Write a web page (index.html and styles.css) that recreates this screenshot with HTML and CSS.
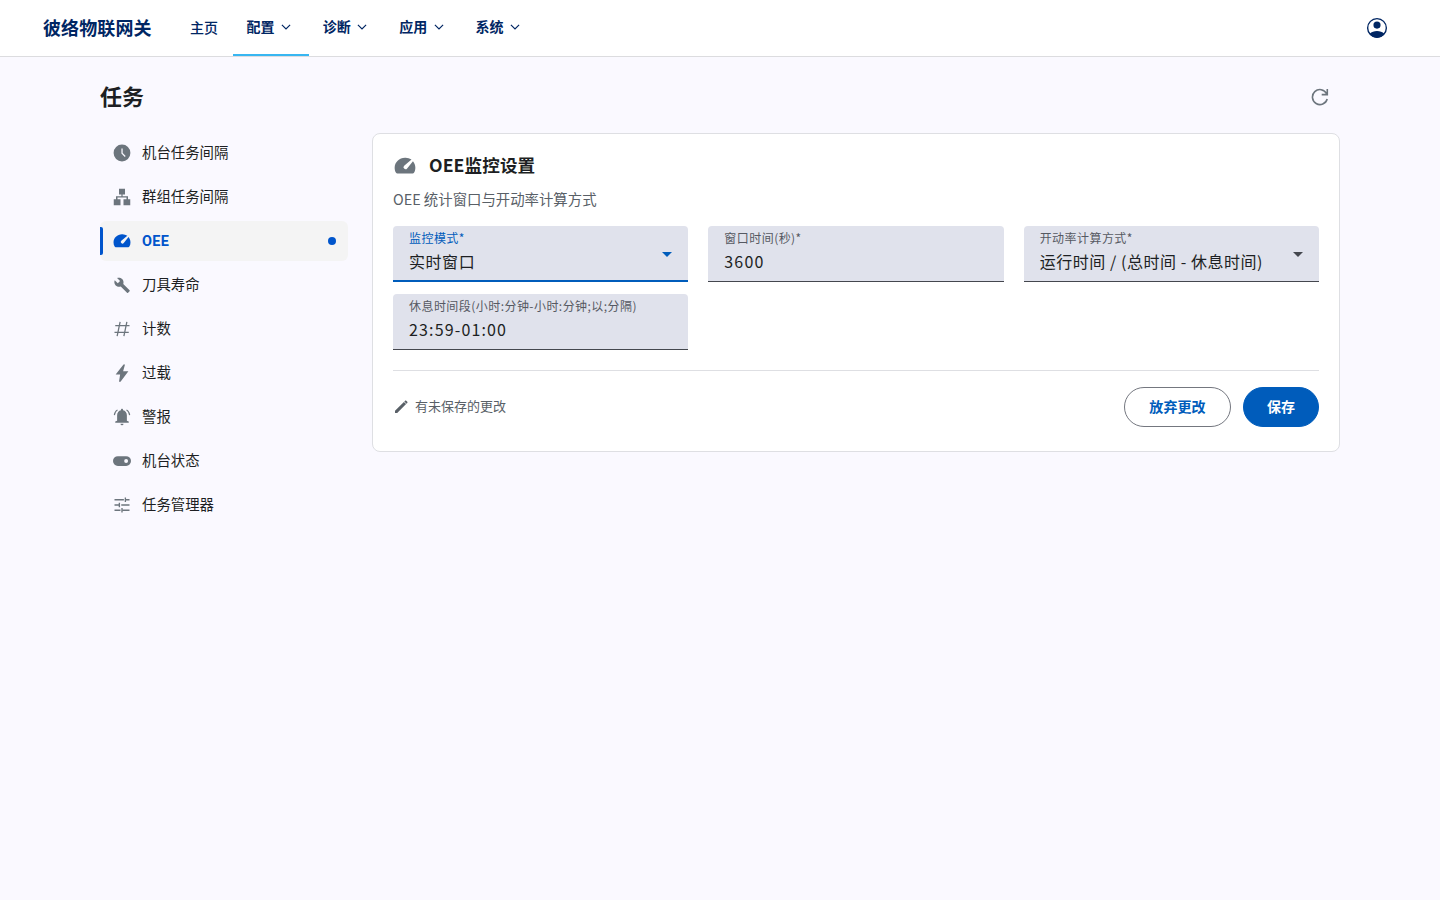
FILE: index.html
```html
<!DOCTYPE html>
<html lang="zh-CN">
<head>
    <meta charset="UTF-8">
    <meta name="viewport" content="width=device-width, initial-scale=1.0">
    <title>任务 - 彼络物联网关</title>
    <link rel="stylesheet" href="styles.css">
</head>
<body>
    <svg class="sprite">
        <symbol id="gauge" viewBox="0 0 24 24">
            <path d="M12 3C5.700 3 .700 7.900.700 13.900c0 2 .5 3.900 1.500 5.500.300.600.800.900 1.400.900h16.800c.6 0 1.100-.3 1.400-.9 1-1.600 1.500-3.500 1.500-5.500 0-2.700-1-5.100-2.600-7.100l-6.400 7.800a2.200 2.200 0 1 1-3.200-3l8-6.600A11.600 11.600 0 0 0 12 3z"/>
        </symbol>
        <symbol id="chevron" viewBox="0 0 10 6">
            <path class="line" d="M.9.9 5 4.900 9.100.900" stroke-width="1.200"/>
        </symbol>
    </svg>

    <header class="topbar">
        <div class="brand">彼络物联网关</div>
        <nav class="nav">
            <a class="nav-item home">主页</a>
            <a class="nav-item active">配置<svg><use href="#chevron"/></svg></a>
            <a class="nav-item">诊断<svg><use href="#chevron"/></svg></a>
            <a class="nav-item">应用<svg><use href="#chevron"/></svg></a>
            <a class="nav-item">系统<svg><use href="#chevron"/></svg></a>
        </nav>
        <svg class="user" viewBox="0 0 24 24">
            <circle class="line" cx="12" cy="12" r="10.200" stroke-width="1.500"/>
            <circle cx="12" cy="8.800" r="3.900"/>
            <path d="M4 18.200c2-2 5-3 8-3s6 1 8 3c-1.800 2.700-4.800 4.300-8 4.300s-6.200-1.600-8-4.300z"/>
        </svg>
    </header>

    <main class="page">
        <div class="page-head">
            <h1>任务</h1>
            <svg class="refresh" viewBox="0 0 18 18">
                <path class="line" d="M15.600 5.600A7.500 7.500 0 1 0 16.200 11M16.300 1v5.600h-5.600" stroke-width="1.600"/>
            </svg>
        </div>

        <div class="layout">
            <aside class="sidebar">
                <a class="side-item">
                    <svg viewBox="0 0 24 24"><path fill-rule="evenodd" d="M12 .8a11.200 11.200 0 1 0 0 22.400A11.200 11.200 0 0 0 12 .8zM11.200 6h1.700v6l4 4-1.200 1.200-4.500-4.500z"/></svg>
                    <span>机台任务间隔</span>
                </a>
                <a class="side-item">
                    <svg viewBox="0 0 24 24"><path d="M8 1h8v7.500h-3.200V11H20v4h3v8h-9v-8h4v-2.200H6V15h4v8H1v-8h3v-4h7.200V8.500H8z"/></svg>
                    <span>群组任务间隔</span>
                </a>
                <a class="side-item active">
                    <svg viewBox="0 0 24 24"><use href="#gauge"/></svg>
                    OEE
                    <i class="dot"></i>
                </a>
                <a class="side-item">
                    <svg viewBox="0 0 24 24"><path d="M22.100 19.100l-8.400-8.400c.8-2.300.2-4.800-1.500-6.600C10.300 2.200 7.600 1.700 5.400 2.700l4 4-3 3-4.100-4c-1 2.200-.5 5 1.300 6.800 1.800 1.800 4.400 2.300 6.700 1.500l8.400 8.400c.4.4 1 .4 1.400 0l2-2c.4-.3.4-.9 0-1.300z"/></svg>
                    <span>刀具寿命</span>
                </a>
                <a class="side-item">
                    <svg viewBox="0 0 24 24"><path class="line" d="M9.500 2.500 5.500 21.500M18.500 2.500 14.500 21.500M3 7.500H22M2 16.500h19" stroke-width="1.700"/></svg>
                    <span>计数</span>
                </a>
                <a class="side-item">
                    <svg viewBox="0 0 24 24"><path d="M14 .8 3.500 14h6L8 23.500h2L20.500 9.500h-7L16 .8z"/></svg>
                    <span>过载</span>
                </a>
                <a class="side-item">
                    <svg viewBox="0 0 24 24"><path d="M12 1c-.8 0-1.400.6-1.400 1.400v.6C7.500 3.600 5.500 6.200 5.500 9.500V17l-2.500 1v1.700h18V18l-2.500-1V9.500c0-3.300-2-5.900-5.100-6.500v-.6C13.400 1.600 12.800 1 12 1zM10 21h4a2 2 0 0 1-4 0z"/><path class="line" d="M6 2.500C3.500 4 2 6.500 1.800 9.500M18 2.500c2.500 1.500 4 4 4.200 7" stroke-width="1.500"/></svg>
                    <span>警报</span>
                </a>
                <a class="side-item">
                    <svg viewBox="0 0 24 24"><path fill-rule="evenodd" d="M6.500 5.500h11a6.500 6.500 0 0 1 0 13h-11a6.500 6.500 0 0 1 0-13zm11 3.900a2.600 2.600 0 1 0 0 5.200 2.600 2.600 0 0 0 0-5.200z"/></svg>
                    <span>机台状态</span>
                </a>
                <a class="side-item">
                    <svg viewBox="0 0 24 24"><path class="line" d="M2 5h12.500M17 5h5M16.500 2v6M2 12h6M11 12h11M8.500 9v6M2 19h8M13 19h9M12 16v6" stroke-width="1.800"/></svg>
                    <span>任务管理器</span>
                </a>
            </aside>

            <section class="card">
                <h2><svg viewBox="0 0 24 24"><use href="#gauge"/></svg><span>OEE监控设置</span></h2>
                <p class="desc">OEE 统计窗口与开动率计算方式</p>

                <div class="fields">
                    <div class="field focused">
                        <label>监控模式*</label>
                        <span>实时窗口</span>
                        <i class="arrow"></i>
                    </div>
                    <div class="field">
                        <label>窗口时间(秒)*</label>
                        <span class="num">3600</span>
                    </div>
                    <div class="field">
                        <label>开动率计算方式*</label>
                        <span>运行时间 / (总时间 - 休息时间)</span>
                        <i class="arrow"></i>
                    </div>
                    <div class="field">
                        <label>休息时间段(小时:分钟-小时:分钟;以;分隔)</label>
                        <span class="num">23:59-01:00</span>
                    </div>
                </div>

                <div class="card-foot">
                    <svg viewBox="0 0 16 16"><path d="M2 14v-2.200L10.900 2.900l2.200 2.200L4.200 14zM11.300 2.500l.8-.8c.3-.3.800-.3 1.100 0l1.100 1.100c.3.300.3.800 0 1.100l-.8.8z"/></svg>
                    <span class="hint">有未保存的更改</span>
                    <button class="btn">放弃更改</button>
                    <button class="btn primary">保存</button>
                </div>
            </section>
        </div>
    </main>
</body>
</html>
```
FILE: styles.css
```css
* {
    box-sizing: border-box;
}
body {
    margin: 0;
    min-height: 100vh;
    background: #faf9ff;
    color: #1d1f23;
    font-family: "Noto Sans CJK SC", "Noto Sans", sans-serif;
}
svg {
    fill: currentColor;
    flex: none;
}
.line {
    fill: none;
    stroke: currentColor;
}
.sprite {
    display: none;
}

/* 顶部导航 */
.topbar {
    display: flex;
    align-items: center;
    height: 57px;
    padding: 0 52px 0 43px;
    background: #fff;
    border-bottom: 1px solid #dcdcdf;
    color: #002663;
}
.brand {
    width: 133px;
    padding-bottom: 2px;
    font-size: 18px;
    font-weight: 700;
    line-height: 54px;
    letter-spacing: 0.1px;
}
.nav {
    display: flex;
    height: 56px;
}
.nav-item {
    display: flex;
    align-items: center;
    width: 76.4px;
    padding: 0 13.4px 2px;
    font-size: 14px;
    font-weight: 600;
    line-height: 20px;
    border-bottom: 2px solid transparent;
}
.nav-item.home {
    width: 57px;
    padding: 0 14px;
    font-weight: 500;
}
.nav-item.active {
    border-color: #38b6f1;
}
.nav-item svg {
    width: 10px;
    height: 6px;
    margin: 1px 0 0 6.4px;
}
.user {
    width: 22px;
    height: 22px;
    margin-left: auto;
}

/* 页面主体 */
.page {
    width: 1240px;
    margin: 0 auto;
}
.page-head {
    display: flex;
    align-items: center;
    justify-content: space-between;
    height: 76px;
    padding: 4px 11px 0 0;
}
.page-head h1 {
    margin: 0;
    padding-bottom: 4px;
    font-size: 22px;
    font-weight: 700;
}
.refresh {
    width: 18px;
    height: 18px;
    color: #6c757d;
}
.layout {
    display: grid;
    grid-template-columns: 248px 968px;
    gap: 24px;
    align-items: start;
}

/* 侧边菜单 */
.sidebar {
    display: flex;
    flex-direction: column;
    gap: 4px;
}
.side-item {
    position: relative;
    display: flex;
    align-items: center;
    gap: 11px;
    height: 40px;
    padding: 0 12px 0 13px;
    border-radius: 6px;
    font-size: 14.4px;
}
.side-item span {
    padding-bottom: 3px;
}
.side-item svg {
    width: 18px;
    height: 18px;
    color: #6c757d;
}
.side-item.active {
    background: #f4f4f4;
    color: #0055cc;
    font-weight: 700;
    font-family: Roboto, sans-serif;
    letter-spacing: 0.4px;
}
.side-item.active svg {
    color: inherit;
}
.side-item.active::before {
    content: "";
    position: absolute;
    left: 0;
    top: 6px;
    width: 3px;
    height: 28px;
    border-radius: 0 2px 2px 0;
    background: #0055cc;
}
.dot {
    width: 8px;
    height: 8px;
    margin-left: auto;
    border-radius: 50%;
    background: #0055cc;
}

/* 设置卡片 */
.card {
    height: 319px;
    padding: 20px;
    background: #fff;
    border: 1px solid #dedfe3;
    border-radius: 8px;
}
.card h2 {
    display: flex;
    align-items: center;
    gap: 13px;
    height: 24px;
    margin: 0;
    padding-left: 1px;
    font-size: 17.6px;
    font-weight: 700;
    letter-spacing: 0.1px;
}
.card h2 span {
    padding-bottom: 3px;
}
.card h2 svg {
    width: 22px;
    height: 22px;
    color: #6c757d;
}
.desc {
    margin: 10px 0 16px;
    font-size: 14.4px;
    line-height: 22px;
    color: #596067;
}
.fields {
    display: grid;
    grid-template-columns: repeat(3, 1fr);
    gap: 12px 20px;
}
.field {
    position: relative;
    height: 56px;
    padding: 3px 16px 0;
    background: #e0e2ec;
    border-bottom: 1px solid #44474e;
    border-radius: 4px 4px 0 0;
}
.field label,
.field span {
    display: block;
    white-space: nowrap;
}
.field label {
    font-size: 12px;
    line-height: 18px;
    letter-spacing: 0.45px;
    color: #565962;
}
.field span {
    padding-top: 2px;
    font-size: 16px;
    line-height: 24px;
    letter-spacing: 0.55px;
}
.field .num {
    letter-spacing: 1.15px;
}
.field.focused {
    border-bottom: 2px solid #005cbb;
}
.field.focused label,
.field.focused .arrow {
    color: #005cbb;
}
.arrow {
    position: absolute;
    right: 16px;
    top: 26px;
    border: 5px solid transparent;
    border-top-color: currentColor;
    border-bottom: 0;
    color: #44474e;
}
.card-foot {
    display: flex;
    align-items: center;
    margin-top: 20px;
    padding-top: 16px;
    border-top: 1px solid #dedfe3;
    color: #596067;
}
.card-foot svg {
    width: 16px;
    height: 16px;
    margin-right: 6px;
}
.hint {
    margin-right: auto;
    padding-bottom: 3px;
    font-size: 13px;
}
.btn {
    width: 107px;
    height: 40px;
    padding: 0 0 2px;
    border: 1px solid #74777f;
    border-radius: 20px;
    background: #fff;
    color: #005cbb;
    font: 700 14px "Noto Sans CJK SC", sans-serif;
    letter-spacing: 0.1px;
}
.btn.primary {
    width: 76px;
    margin-left: 12px;
    border-color: #005cbb;
    background: #005cbb;
    color: #fff;
}
```
